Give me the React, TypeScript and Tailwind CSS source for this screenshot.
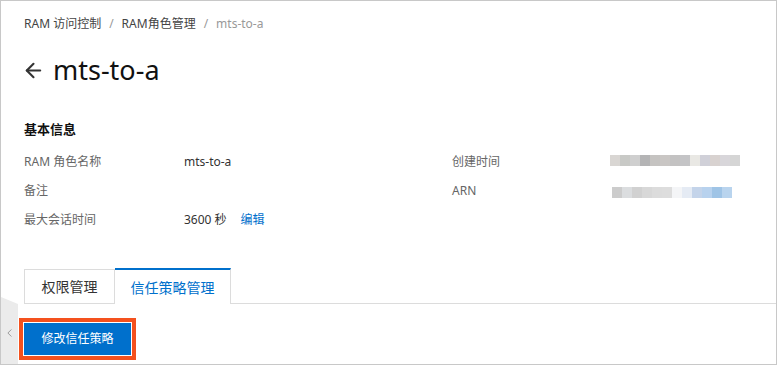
import { ArrowLeft, ChevronLeft } from "lucide-react";

const font = { fontFamily: '"Noto Sans", "Noto Sans CJK SC", sans-serif' };

// blurred values in the screenshot, drawn as mosaic blocks
const createdBlocks = ["#d9d6d3", "#c8c9c6", "#cfcfcf", "#b4b4b5", "#c5c3c1", "#c9c6c4", "#c3c2c2", "#c4c4c6", "#e9e8e4", "#d0d0d8", "#d8d2d0", "#d8d6da", "#d5d5d5"];
const arnBlocks = ["#cccccc", "#dbdddf", "#d1d1d1", "#d8d8d8", "#dcdcdc", "#dddddd", "#f4f5f7", "#e5ebf4", "#c4d4ea", "#b8d2ee", "#9fc4e6", "#b9d4ee"];

function Mosaic({ colors }: { colors: string[] }) {
  return (
    <div className="flex h-[11px]">
      {colors.map((c, i) => (
        <div key={i} className="w-[10px] h-full" style={{ backgroundColor: c }} />
      ))}
    </div>
  );
}

function InfoRow({ label, children }: { label: string; children?: React.ReactNode }) {
  return (
    <div className="flex h-[29px] items-center">
      <div className="w-[160px] text-[12px] text-[#666]">{label}</div>
      <div className="flex items-center text-[12px] text-[#333]">{children}</div>
    </div>
  );
}

export default function App() {
  return (
    <div
      className="relative w-[777px] h-[365px] overflow-hidden bg-white border border-[#c8c8c8]"
      style={font}
    >
      <div className="pl-[23px]">
        {/* breadcrumb */}
        <div className="flex items-center h-[18px] mt-[14px] text-[12px] text-[#444]">
          <span>RAM 访问控制</span>
          <span className="mx-[8px] text-[#999]">/</span>
          <span>RAM角色管理</span>
          <span className="mx-[8px] text-[#999]">/</span>
          <span className="text-[#999]">mts-to-a</span>
        </div>

        {/* title */}
        <div className="flex items-center h-[36px] mt-[19px]">
          <ArrowLeft className="w-[23px] h-[23px] text-[#333] -ml-[2px]" strokeWidth={2.2} />
          <span className="ml-[8px] text-[27px] text-[#111] leading-[36px]">mts-to-a</span>
        </div>

        {/* basic info */}
        <div className="mt-[31px] h-[20px] text-[13px] font-bold text-[#111] leading-[20px]">基本信息</div>
        <div className="flex mt-[8px]">
          <div className="w-[428px]">
            <InfoRow label="RAM 角色名称">mts-to-a</InfoRow>
            <InfoRow label="备注" />
            <InfoRow label="最大会话时间">
              <span>3600 秒</span>
              <span className="ml-[14px] text-[#0070cc]">编辑</span>
            </InfoRow>
          </div>
          <div className="w-[300px]">
            <div className="flex h-[29px] items-center">
              <div className="w-[158px] text-[12px] text-[#666]">创建时间</div>
              <div className="-mt-[3px]"><Mosaic colors={createdBlocks} /></div>
            </div>
            <div className="flex h-[29px] items-center">
              <div className="w-[160px] text-[12px] text-[#666]">ARN</div>
              <div className="mt-[3px]"><Mosaic colors={arnBlocks} /></div>
            </div>
          </div>
        </div>

        {/* tabs */}
        <div className="flex mt-[34px] h-[36px]">
          <div className="w-[91px] flex items-center justify-center border border-[#dcdcdc] text-[14px] text-[#333] mt-[1px] h-[35px]">
            权限管理
          </div>
          <div className="w-[116px] flex items-center justify-center border-t-2 border-t-[#0070cc] border-r border-r-[#dcdcdc] text-[14px] text-[#0070cc] h-[36px]">
            信任策略管理
          </div>
          <div className="flex-1 border-b border-[#dcdcdc]" />
        </div>

        {/* action */}
        <div className="mt-[14px] -ml-[5px] w-[117px] h-[42px] border-[4px] border-[#f4511e] p-[1px]">
          <button className="w-full h-full bg-[#0070cc] text-white text-[12px]">修改信任策略</button>
        </div>
      </div>

      {/* side collapse handle */}
      <div className="absolute left-0 top-[296px] w-[17px] h-[70px] bg-[#ebebeb] [clip-path:polygon(0_0,100%_7px,100%_100%,0_100%)] flex items-center justify-center">
        <ChevronLeft className="w-[13px] h-[16px] text-[#999] mt-[2px]" strokeWidth={1.8} />
      </div>
    </div>
  );
}
